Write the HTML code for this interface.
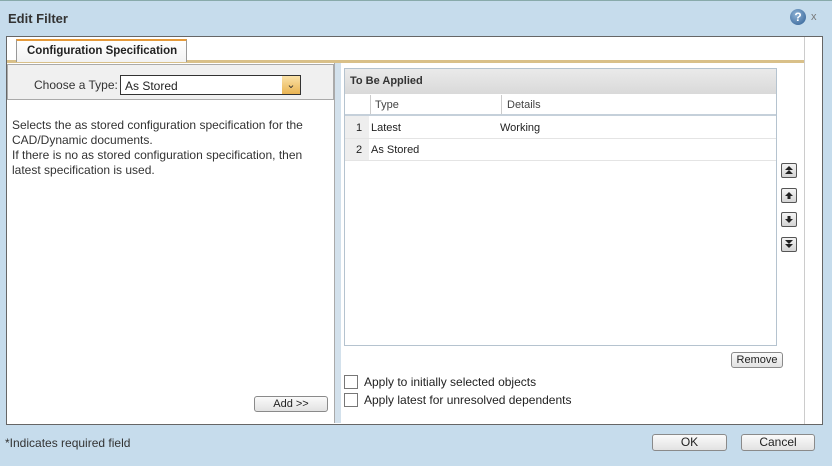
<!DOCTYPE html>
<html><head><style>
*{margin:0;padding:0;box-sizing:border-box}
body{width:832px;height:466px;background:#c6dcec;font-family:"Liberation Sans",Arial,sans-serif;font-size:12px;color:#222;position:relative;overflow:hidden}
.a{position:absolute}
.btn{position:absolute;border:1px solid #8a8a8a;border-radius:3px;background:linear-gradient(#fafafa,#e2e2e2);text-align:center;font-size:11px;color:#222}
.ib{position:absolute;left:781px;width:16px;height:15px;border:1px solid #555;border-radius:2px;background:linear-gradient(#f4f4f4,#d4d4d4)}
.cb{position:absolute;left:344px;width:14px;height:14px;border:1px solid #777;background:#fff}
</style></head><body>
<div class="a" style="left:0;top:0;width:832px;height:1px;background:#8aa"></div>
<div class="a" style="left:8px;top:11px;font-weight:bold;font-size:13px;color:#333">Edit Filter</div>
<div class="a" style="left:790px;top:9px;width:16px;height:16px;border-radius:50%;background:radial-gradient(circle at 40% 35%,#8fb3d6,#2d5d92);color:#fff;font-weight:bold;font-size:12px;text-align:center;line-height:16px">?</div>
<div class="a" style="left:811px;top:11px;color:#777;font-size:11px">x</div>
<div class="a" style="left:6px;top:36px;width:817px;height:389px;background:#fff;border:1px solid #666"></div>
<div class="a" style="left:804px;top:37px;width:1px;height:387px;background:#ccc"></div>
<div class="a" style="left:7px;top:60px;width:797px;height:3px;background:#d9c089"></div>
<div class="a" style="left:16px;top:39px;width:171px;height:23px;border:1px solid #999;border-top:2px solid #e59b3c;border-bottom:none;background:linear-gradient(#fff,#f2f2f2);font-weight:bold;font-size:11.5px;padding:4px 0 0 10px">Configuration Specification</div>
<div class="a" style="left:7px;top:64px;width:327px;height:36px;background:#f0f0f0;border:1px solid #aaa"></div>
<div class="a" style="left:34px;top:78px;font-size:12px;color:#333">Choose a Type:</div>
<div class="a" style="left:120px;top:75px;width:181px;height:20px;border:1px solid #333;background:#fff;padding:3px 4px;font-size:12px">As Stored</div>
<div class="a" style="left:282px;top:76px;width:18px;height:18px;background:linear-gradient(#fbe2a8,#e9b352);color:#333;font-size:11px;text-align:center;line-height:18px">&#8964;</div>
<div class="a" style="left:334px;top:63px;width:1px;height:360px;background:#aaa"></div>
<div class="a" style="left:335px;top:63px;width:6px;height:360px;background:#d3e1ec"></div>
<div class="a" style="left:12px;top:118px;width:320px;line-height:15px;font-size:12px;color:#333">Selects the as stored configuration specification for the CAD/Dynamic documents.<br>If there is no as stored configuration specification, then latest specification is used.</div>
<div class="btn" style="left:254px;top:396px;width:74px;height:16px;line-height:14px">Add &gt;&gt;</div>
<div class="a" style="left:344px;top:68px;width:433px;height:278px;border:1px solid #b5c3cf;background:#fff"></div>
<div class="a" style="left:345px;top:69px;width:431px;height:25px;background:linear-gradient(#eaeaea,#d9d9d9);font-weight:bold;font-size:11px;padding:6px 0 0 5px;color:#333">To Be Applied</div>
<div class="a" style="left:345px;top:94px;width:431px;height:22px;border-bottom:2px solid #c5d0da"></div>
<div class="a" style="left:370px;top:95px;width:1px;height:19px;background:#ccc"></div>
<div class="a" style="left:501px;top:95px;width:1px;height:19px;background:#ccc"></div>
<div class="a" style="left:375px;top:99px;font-size:11px;color:#444">Type</div>
<div class="a" style="left:507px;top:99px;font-size:11px;color:#444">Details</div>
<div class="a" style="left:345px;top:116px;width:24px;height:44px;background:#eee"></div>
<div class="a" style="left:345px;top:138px;width:431px;height:1px;background:#e4e4e4"></div>
<div class="a" style="left:345px;top:160px;width:431px;height:1px;background:#e4e4e4"></div>
<div class="a" style="left:356px;top:122px;font-size:11px">1</div>
<div class="a" style="left:371px;top:122px;font-size:11px">Latest</div>
<div class="a" style="left:500px;top:122px;font-size:11px">Working</div>
<div class="a" style="left:356px;top:144px;font-size:11px">2</div>
<div class="a" style="left:371px;top:144px;font-size:11px">As Stored</div>
<div class="ib" style="top:163px"><svg width="14" height="13"><path d="M7 2L3 6H11Z M7 6L3 10H11Z" fill="#222"/></svg></div>
<div class="ib" style="top:188px"><svg width="14" height="13"><path d="M7 3L3 7H11Z" fill="#222"/><rect x="5.5" y="7" width="3" height="3" fill="#222"/></svg></div>
<div class="ib" style="top:212px"><svg width="14" height="13"><rect x="5.5" y="3" width="3" height="3" fill="#222"/><path d="M7 10L3 6H11Z" fill="#222"/></svg></div>
<div class="ib" style="top:237px"><svg width="14" height="13"><path d="M7 6L3 2H11Z M7 10L3 6H11Z" fill="#222"/></svg></div>
<div class="btn" style="left:731px;top:352px;width:52px;height:16px;line-height:14px">Remove</div>
<div class="cb" style="top:375px"></div>
<div class="a" style="left:364px;top:375px;font-size:12px">Apply to initially selected objects</div>
<div class="cb" style="top:393px"></div>
<div class="a" style="left:364px;top:393px;font-size:12px">Apply latest for unresolved dependents</div>
<div class="a" style="left:5px;top:436px;font-size:12px;color:#333">*Indicates required field</div>
<div class="btn" style="left:652px;top:434px;width:75px;height:17px;line-height:15px;font-size:12px">OK</div>
<div class="btn" style="left:741px;top:434px;width:74px;height:17px;line-height:15px;font-size:12px">Cancel</div>
</body></html>
